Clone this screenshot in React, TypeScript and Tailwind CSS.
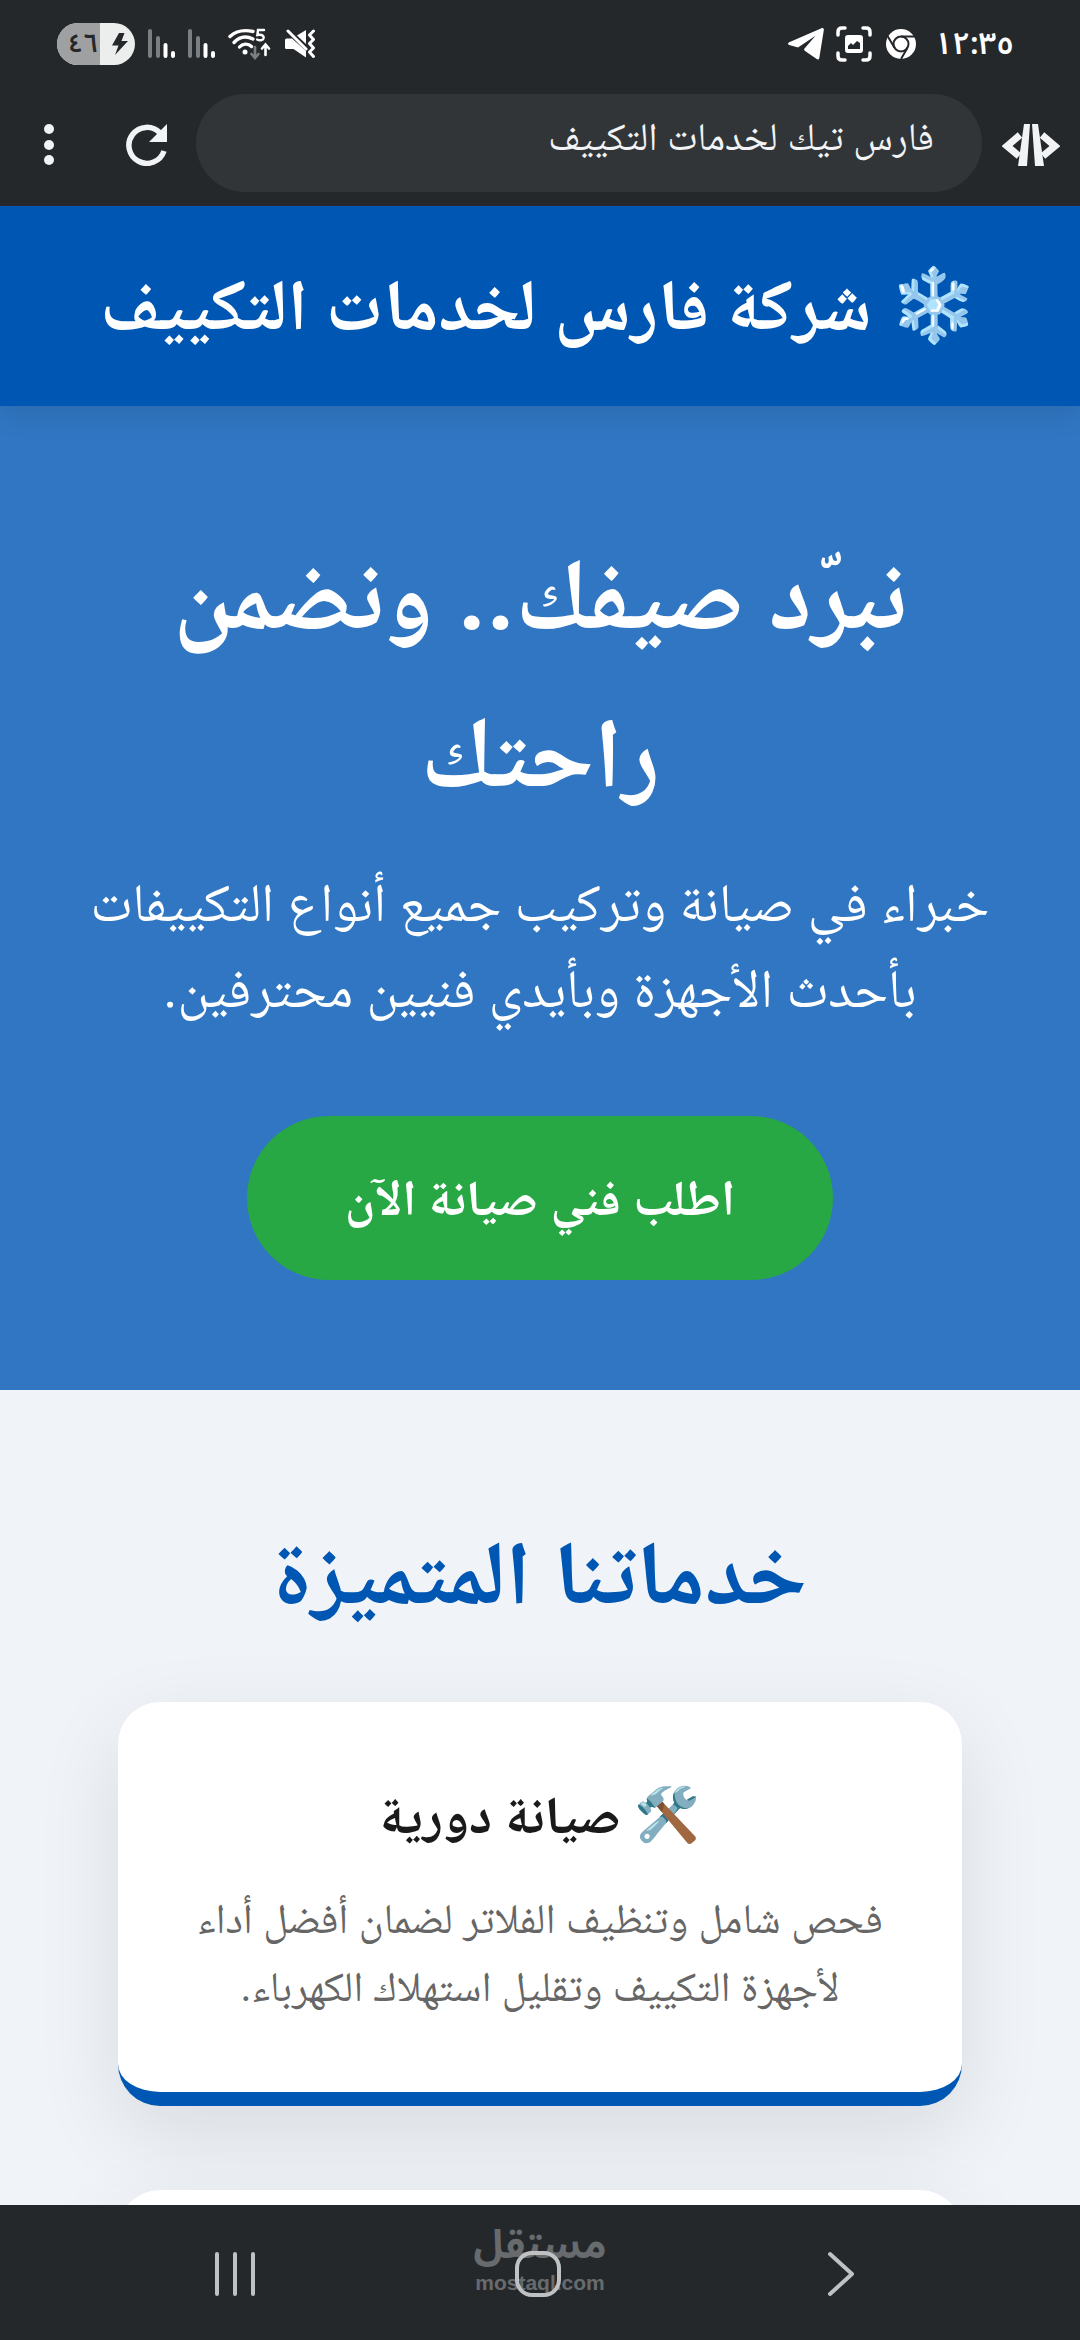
import { ReactNode } from "react";

const services = [
  {
    icon: "🛠️",
    title: "صيانة دورية",
    text: "فحص شامل وتنظيف الفلاتر لضمان أفضل أداء لأجهزة التكييف وتقليل استهلاك الكهرباء.",
  },
  {
    icon: "❄️",
    title: "تركيب احترافي",
    text: "تركيب جميع أنواع المكيفات بأعلى جودة.",
  },
];

function SignalIcon() {
  return (
    <svg width="27" height="30" viewBox="0 0 27 30" strokeWidth="4" strokeLinecap="round">
      <path d="M2 2v25M10 9v18" stroke="#7c7f81" />
      <path d="M17.500 16v11M25 24v3" stroke="#fff" />
    </svg>
  );
}

function WifiIcon() {
  return (
    <svg width="44" height="32" viewBox="0 0 44 32" fill="none" strokeLinecap="round">
      <g stroke="#fff" strokeWidth="3.400">
        <path d="M2 8.500C8 3 16 1.500 25 3.500" />
        <path d="M6 14.500C11 9 18 7.500 25 11" />
        <path d="M11.500 19C14.500 15.500 20 15 23.500 18.500" />
      </g>
      <circle cx="17" cy="24" r="2.500" fill="#fff" />
      <path d="M36 2h-6l-.6 5c5-1 6.800 1 6.200 3.300-.7 2.200-4 2.500-6.500 1.200" stroke="#fff" strokeWidth="2.400" />
      <path d="M27 19v10M23.500 26l3.500 4 3.500-4" stroke="#7c7f81" strokeWidth="2.600" />
      <path d="M37.500 27V17M34 20.500l3.500-4 3.500 4" stroke="#fff" strokeWidth="2.600" />
    </svg>
  );
}

function MuteIcon() {
  return (
    <svg width="31" height="30" viewBox="0 0 31 30" fill="none">
      <path d="M1.500 9.500H7L21 22v6.500L8.500 20h-7Q0 20 0 18.500V11q0-1.500 1.500-1.500z" fill="#fff" />
      <path d="M12 6.500 21 1v14z" fill="#fff" />
      <path d="M3 2l18 18" stroke="#fff" strokeWidth="3" strokeLinecap="round" />
      <path d="M28.500 2l-4 4 4 4.500-4 4 4 4.500-4 4 4 4.500" stroke="#fff" strokeWidth="3" strokeLinecap="round" strokeLinejoin="round" />
    </svg>
  );
}

function TelegramIcon() {
  return (
    <svg width="36" height="32" viewBox="0 0 36 32" fill="#fff">
      <path d="M33.500.3 1.200 14.200c-1.600.8-1.500 2.200 0 2.700l8.800 2.700L27.500 7.800 16.500 20.500c-.6.8-.5 1.600.2 2.200l12 8.400c1.300.8 2.300.3 2.600-1.200L35.800 2.200c.2-1.600-.8-2.500-2.300-1.900z" />
    </svg>
  );
}

function ScreenshotIcon() {
  return (
    <svg width="36" height="36" viewBox="0 0 36 36" fill="none">
      <path
        d="M2 9V6q0-4 4-4h3M27 2h3q4 0 4 4v3M34 27v3q0 4-4 4h-3M9 34H6q-4 0-4-4v-3"
        stroke="#fff"
        strokeWidth="3.500"
        strokeLinecap="round"
      />
      <path
        fillRule="evenodd"
        fill="#fff"
        d="M12 9h12q3 0 3 3v12q0 3-3 3H12q-3 0-3-3V12q0-3 3-3zm0 14h12v-6l-3-2-4 4-2-2-3 3z"
      />
    </svg>
  );
}

function ChromeIcon() {
  return (
    <svg width="30" height="30" viewBox="0 0 30 30" fill="none">
      <circle cx="15" cy="15" r="15" fill="#fff" />
      <circle cx="15" cy="15" r="7.500" stroke="#24282b" strokeWidth="2" />
      <path d="M15 7.500h14M8.500 18.700 1.500 7M21.500 18.700 15 30" stroke="#24282b" strokeWidth="2" />
    </svg>
  );
}

function BatteryPill() {
  return (
    <div className="flex h-[42px] w-[78px] items-center rounded-full bg-[#eceeee]">
      <span className="flex h-full w-[43px] items-center justify-end rounded-l-full bg-[#9fa0a1] pr-0.5 text-[26px] leading-[42px] font-semibold text-[#24282b]">
        ٤٦
      </span>
      <svg className="ml-3" width="16" height="22" viewBox="0 0 16 22" fill="#24282b">
        <path d="M7 0h5.500L9.500 8H16L3 22l3.500-9.500H0z" />
      </svg>
    </div>
  );
}

function StatusBar() {
  return (
    <div className="flex h-[88px] items-center justify-between pr-[66px] pl-[57px] font-['Noto_Sans_Arabic',sans-serif]">
      <div className="flex items-center gap-[13px]">
        <BatteryPill />
        <SignalIcon />
        <SignalIcon />
        <WifiIcon />
        <MuteIcon />
      </div>
      <div className="flex items-center gap-3 text-white">
        <TelegramIcon />
        <ScreenshotIcon />
        <span className="pl-0.5">
          <ChromeIcon />
        </span>
        <span className="pl-1.5 text-[31px] leading-[36px] font-semibold">١٢:٣٥</span>
      </div>
    </div>
  );
}

function IconButton({ label, children }: { label: string; children: ReactNode }) {
  return (
    <button type="button" aria-label={label} className="flex items-center justify-center">
      {children}
    </button>
  );
}

function Toolbar() {
  return (
    <div className="flex items-center pt-1.5 pr-5 pb-3.5 pl-11">
      <div className="flex pt-1">
        <IconButton label="القائمة">
          <svg width="10" height="42" viewBox="0 0 10 42" fill="#f1f3f4">
            <circle cx="5" cy="5" r="5" />
            <circle cx="5" cy="21" r="5" />
            <circle cx="5" cy="36" r="5" />
          </svg>
        </IconButton>
      </div>
      <div className="mr-7 ml-[72px] flex pt-1">
        <IconButton label="تحديث">
          <svg width="42" height="42" viewBox="0 0 42 42" fill="none">
            <path d="M38 27A18 18 0 1 1 34 9" stroke="#f1f3f4" strokeWidth="5.500" />
            <path d="M41 0v18H23z" fill="#f1f3f4" />
          </svg>
        </IconButton>
      </div>
      <input
        dir="rtl"
        type="text"
        aria-label="عنوان الصفحة"
        defaultValue="فارس تيك لخدمات التكييف"
        className="h-[98px] min-w-0 flex-1 rounded-full bg-[#313538] px-12 pb-1 text-[39px] text-[#f1f3f4]"
      />
      <div className="ml-5 flex pt-1">
        <IconButton label="عرض المصدر">
          <svg width="58" height="42" viewBox="0 0 58 42" fill="none">
            <path d="M18 11 5 22l12 10M40 11l13 11-12 10" stroke="#f1f3f4" strokeWidth="7" />
            <path d="M22 0h6l-3 42h-9zM30 0h6l6 42h-9z" fill="#f1f3f4" />
          </svg>
        </IconButton>
      </div>
    </div>
  );
}

function ServiceCard({ icon, title, text }: { icon: string; title: string; text: string }) {
  return (
    <article className="rounded-[42px] border-b-[14px] border-[#0056b3] bg-white p-[71px] text-center shadow-[0_28px_84px_rgba(0,0,0,0.1)]">
      <h3 className="mb-7 text-[53px] leading-[84px] font-bold text-[#1a1a1a]">
        {icon} {title}
      </h3>
      <p className="text-[42px] leading-[68px] text-[#666]">{text}</p>
    </article>
  );
}

function NavBar() {
  return (
    <nav className="relative grid h-[135px] shrink-0 grid-cols-3 items-center bg-[#24282b] pt-0.5 pr-[88px] pl-[84px]">
      <div dir="rtl" className="absolute inset-0 flex flex-col items-center pt-4 text-[#686b6d]">
        <span className="font-['Noto_Sans_Arabic',sans-serif] text-[40px] leading-[50px] font-bold">مستقل</span>
        <span className="font-['Liberation_Sans',sans-serif] text-[21px] leading-[24px] font-bold">mostaql.com</span>
      </div>
      <IconButton label="التطبيقات الأخيرة">
        <svg width="42" height="44" viewBox="0 0 42 44" stroke="#bfc1c3" strokeWidth="4" strokeLinecap="round">
          <path d="M3 2v40M21 2v40M39 2v40" />
        </svg>
      </IconButton>
      <IconButton label="الرئيسية">
        <svg className="relative" width="46" height="46" viewBox="0 0 46 46" fill="none" stroke="#bfc1c3" strokeWidth="4">
          <rect x="2" y="2" width="42" height="42" rx="15" />
        </svg>
      </IconButton>
      <IconButton label="رجوع">
        <svg width="28" height="46" viewBox="0 0 28 46" fill="none" stroke="#bfc1c3" strokeWidth="4" strokeLinecap="round" strokeLinejoin="round">
          <path d="M3 3l22 20L3 43" />
        </svg>
      </IconButton>
    </nav>
  );
}

export default function App() {
  return (
    <div className="flex h-screen flex-col bg-[#f0f4f8] font-['Roboto','Noto_Naskh_Arabic',sans-serif]">
      <div className="shrink-0 bg-[#24282b]">
        <StatusBar />
        <Toolbar />
      </div>

      <div dir="rtl" className="min-h-0 flex-1 overflow-hidden">
        <header className="relative z-10 bg-[#0056b3] px-10 py-[42px] text-center text-white shadow-[0_6px_28px_rgba(0,0,0,0.1)]">
          <h1 className="text-[72px] leading-[116px] font-bold">❄️ شركة فارس لخدمات التكييف</h1>
        </header>

        <section className="bg-[#3076c2] px-14 py-[110px] text-center text-white">
          <h2 className="mb-7 text-[99px] leading-[158px] font-bold">نبرّد صيفك.. ونضمن راحتك</h2>
          <p className="mb-[84px] text-[54px] leading-[86px]">
            خبراء في صيانة وتركيب جميع أنواع التكييفات بأحدث الأجهزة وبأيدي فنيين محترفين.
          </p>
          <a
            href="#order"
            className="inline-block rounded-full bg-[#28a745] px-[98px] py-[42px] align-top text-[50px] leading-[80px] font-bold"
          >
            اطلب فني صيانة الآن
          </a>
        </section>

        <section className="px-[118px] py-28">
          <h2 className="mb-14 text-center text-[90px] leading-[144px] font-bold text-[#0056b3]">خدماتنا المتميزة</h2>
          <div className="flex flex-col gap-[84px]">
            {services.map((s) => (
              <ServiceCard key={s.title} {...s} />
            ))}
          </div>
        </section>
      </div>

      <NavBar />
    </div>
  );
}
